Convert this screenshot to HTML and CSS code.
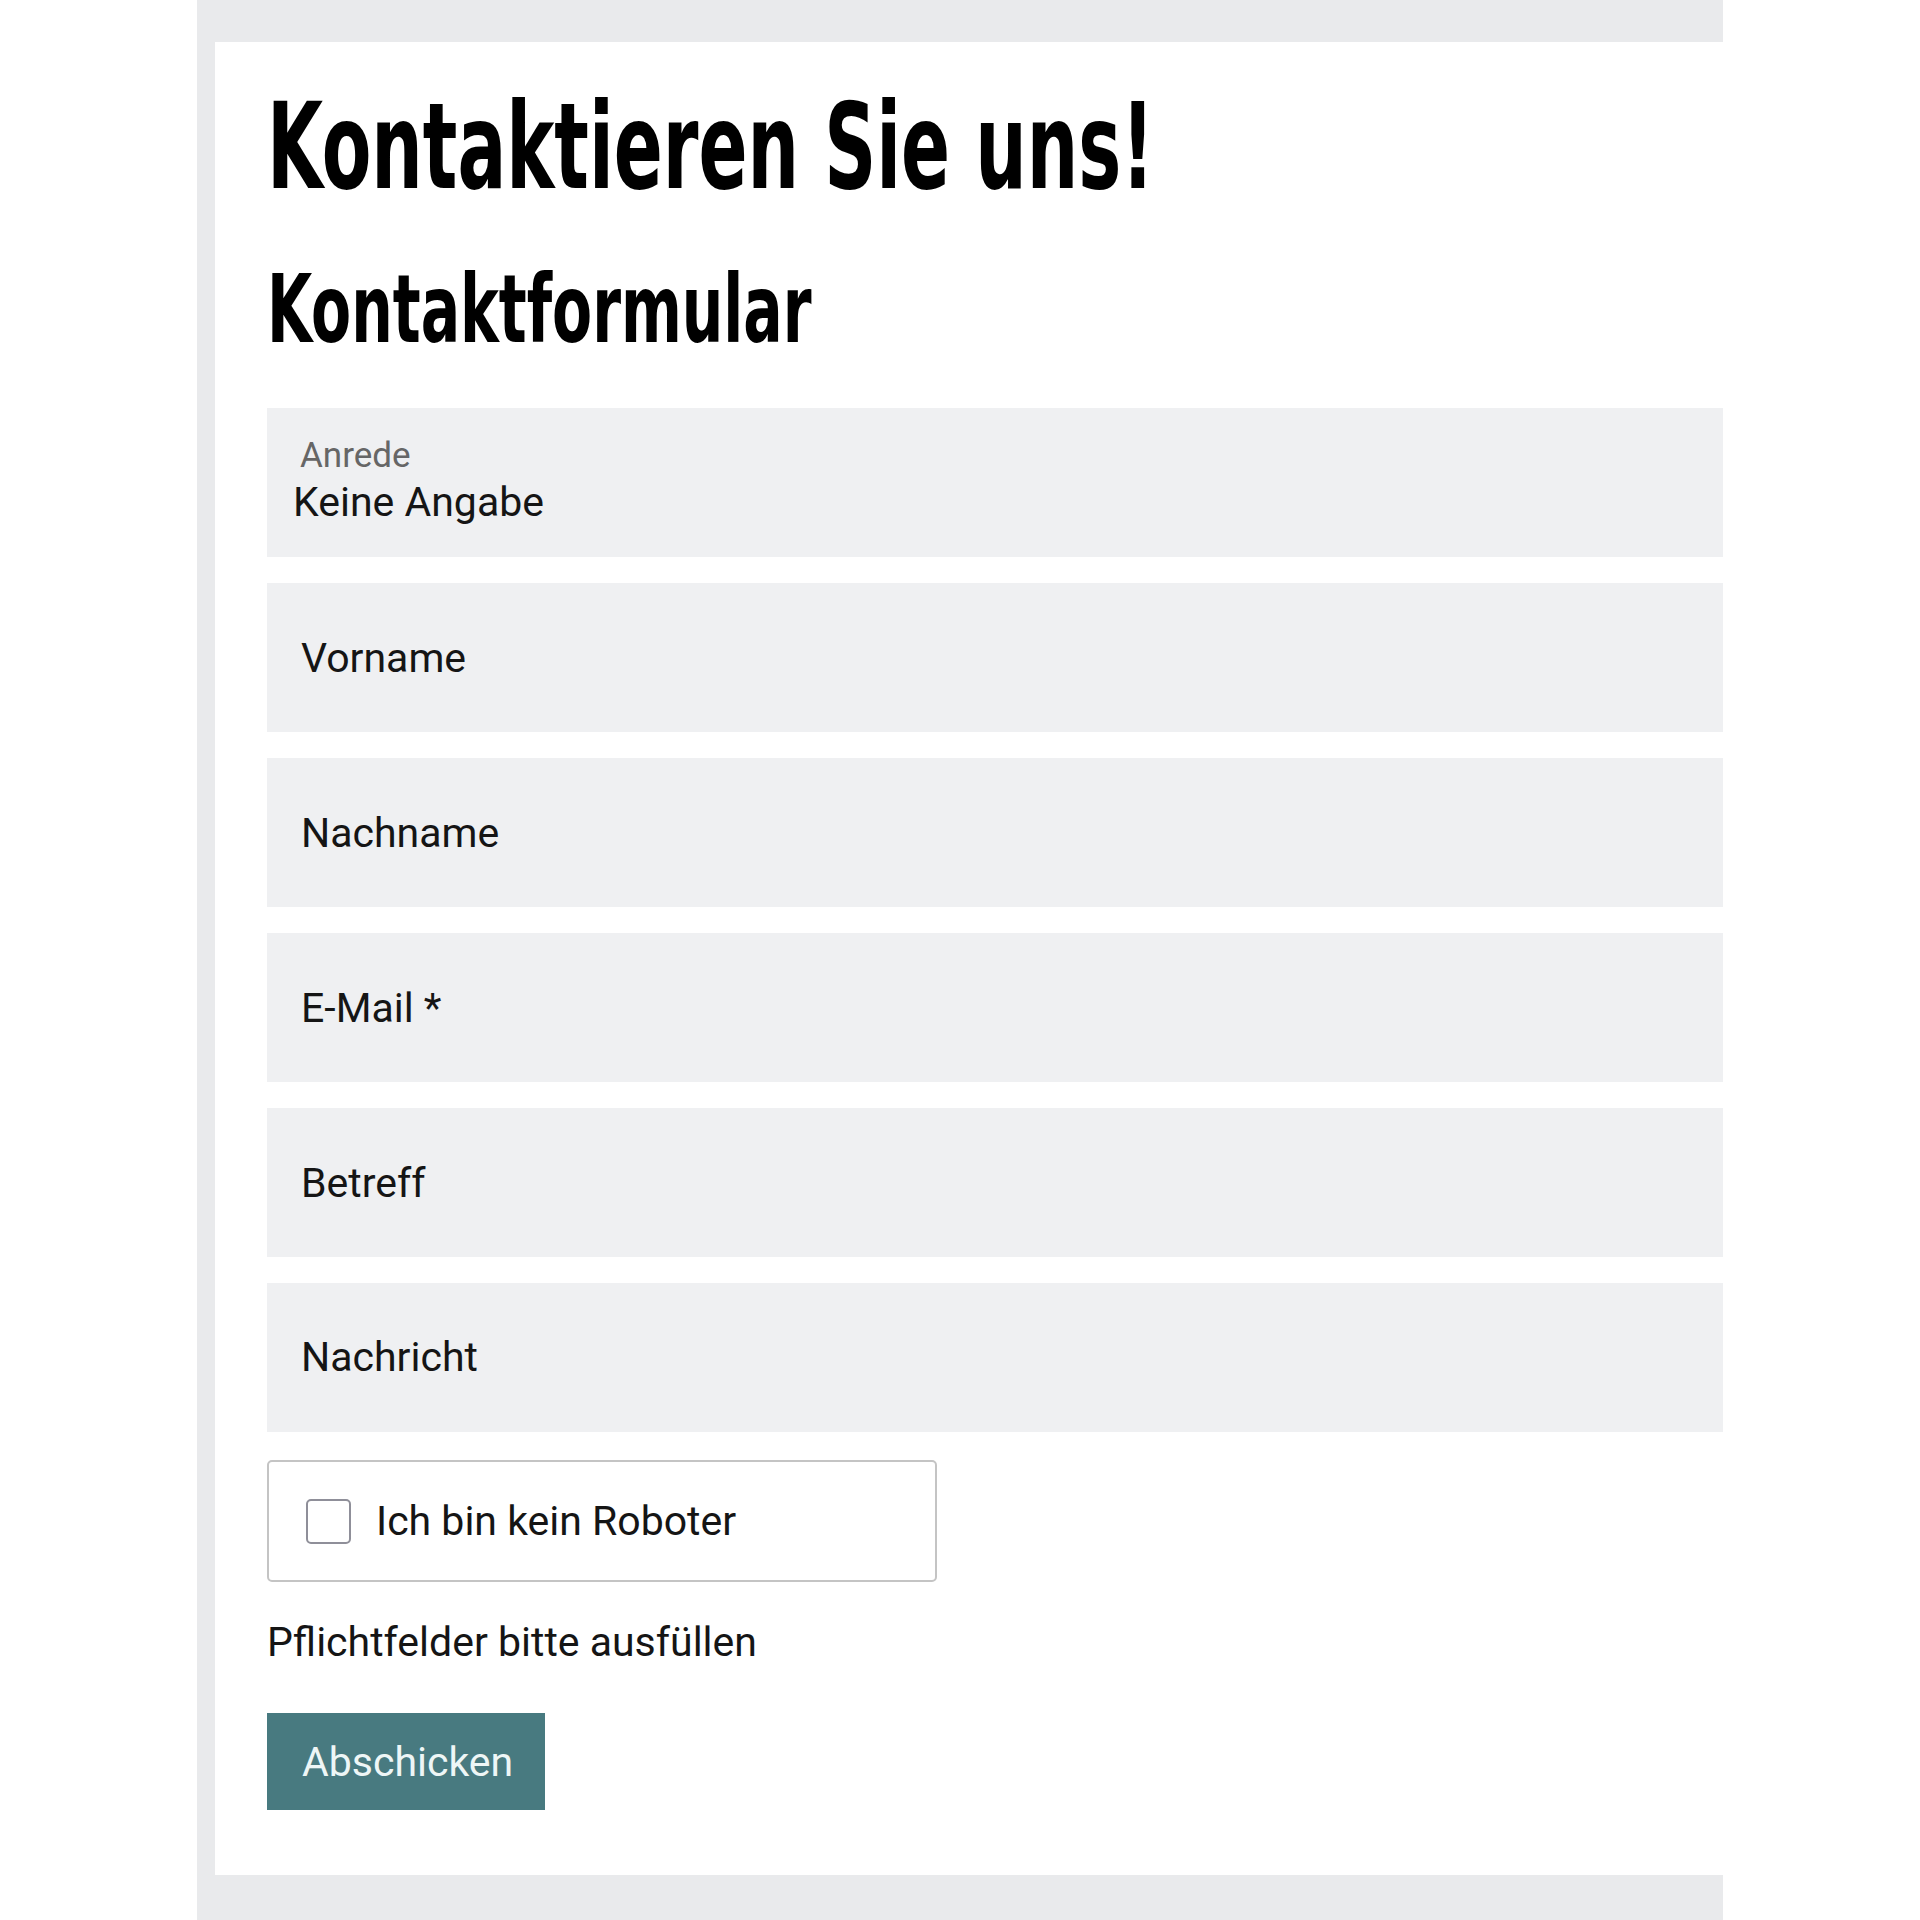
FILE: index.html
```html
<!DOCTYPE html>
<html lang="de">
<head>
<meta charset="utf-8">
<title>Kontakt</title>
<link rel="stylesheet" href="styles.css">
</head>
<body>
<div class="frame">
  <main class="panel">
    <h1 class="title"><span class="squeeze">Kontaktieren Sie uns!</span></h1>
    <h2 class="subtitle"><span class="squeeze">Kontaktformular</span></h2>
    <form class="form">
      <div class="field field-select">
        <span class="select-label">Anrede</span>
        <span class="select-value">Keine Angabe</span>
      </div>
      <input class="field field-input" type="text" placeholder="Vorname">
      <input class="field field-input" type="text" placeholder="Nachname">
      <input class="field field-input" type="email" placeholder="E-Mail *">
      <input class="field field-input" type="text" placeholder="Betreff">
      <textarea class="field field-text" placeholder="Nachricht"></textarea>
      <label class="captcha">
        <input class="captcha-box" type="checkbox">
        <span class="captcha-text">Ich bin kein Roboter</span>
      </label>
      <p class="hint">Pflichtfelder bitte ausfüllen</p>
      <button class="submit" type="button">Abschicken</button>
    </form>
  </main>
</div>
</body>
</html>
```

FILE: styles.css
```css
html, body {
  margin: 0;
  padding: 0;
  background: #ffffff;
}

body {
  font-family: Roboto, "Liberation Sans", sans-serif;
  color: #151515;
}

.frame {
  margin-left: 197px;
  width: 1526px;
  background: #e9eaec;
  padding: 42px 0 45px 18px;
  box-sizing: border-box;
}

.panel {
  display: block;
  background: #ffffff;
  padding: 33px 0 65px 52px;
}

/* condensed display headings */
.title,
.subtitle {
  margin: 0;
  font-family: "DejaVu Sans Condensed", "DejaVu Sans", sans-serif;
  font-stretch: condensed;
  font-weight: 700;
  color: #000;
  white-space: nowrap;
}

.squeeze {
  display: inline-block;
  transform-origin: left center;
}

.title {
  font-size: 120px;
  line-height: 144px;
}

.title .squeeze {
  transform: scaleX(0.67);
}

.subtitle {
  margin-top: 35px;
  font-size: 94px;
  line-height: 112px;
}

.subtitle .squeeze {
  transform: scaleX(0.69);
}

.form {
  margin-top: 42px;
  display: flex;
  flex-direction: column;
  align-items: flex-start;
}

.field {
  box-sizing: border-box;
  width: 1456px;
  height: 149px;
  margin: 0 0 26px 0;
  border: 0;
  border-radius: 0;
  background: #eff0f2;
  font-family: Roboto, "Liberation Sans", sans-serif;
  font-size: 41px;
  color: #151515;
  outline: none;
}

.field-select {
  display: flex;
  flex-direction: column;
  padding: 29px 0 0 26px;
}

.select-label {
  font-size: 35px;
  line-height: 38px;
  color: #666666;
  padding-left: 7px;
}

.select-value {
  margin-top: 3px;
  font-size: 41px;
  line-height: 48px;
  color: #151515;
}

.field-input {
  padding: 0 34px;
  line-height: 48px;
}

.field-text {
  display: block;
  resize: none;
  padding: 50px 34px 0;
  line-height: 48px;
  margin-bottom: 28px;
}

.field::placeholder {
  color: #151515;
  opacity: 1;
}

.captcha {
  box-sizing: border-box;
  width: 670px;
  height: 122px;
  border: 2px solid #c4c4c4;
  border-radius: 5px;
  display: flex;
  align-items: center;
  padding-left: 37px;
  gap: 25px;
  background: #ffffff;
}

.captcha-box {
  appearance: none;
  -webkit-appearance: none;
  margin: 0;
  width: 45px;
  height: 45px;
  border: 2px solid #8f8f99;
  border-radius: 5px;
  background: #fff;
}

.captcha-text {
  font-size: 41px;
  line-height: 48px;
  color: #151515;
}

.hint {
  margin: 36px 0 0 0;
  font-size: 41px;
  line-height: 48px;
  color: #151515;
}

.submit {
  margin-top: 47px;
  box-sizing: border-box;
  width: 278px;
  height: 97px;
  border: 0;
  border-radius: 0;
  background: #487a80;
  color: #eef6f6;
  font-family: Roboto, "Liberation Sans", sans-serif;
  font-size: 41px;
  text-align: left;
  padding: 0 0 0 35px;
}
```
